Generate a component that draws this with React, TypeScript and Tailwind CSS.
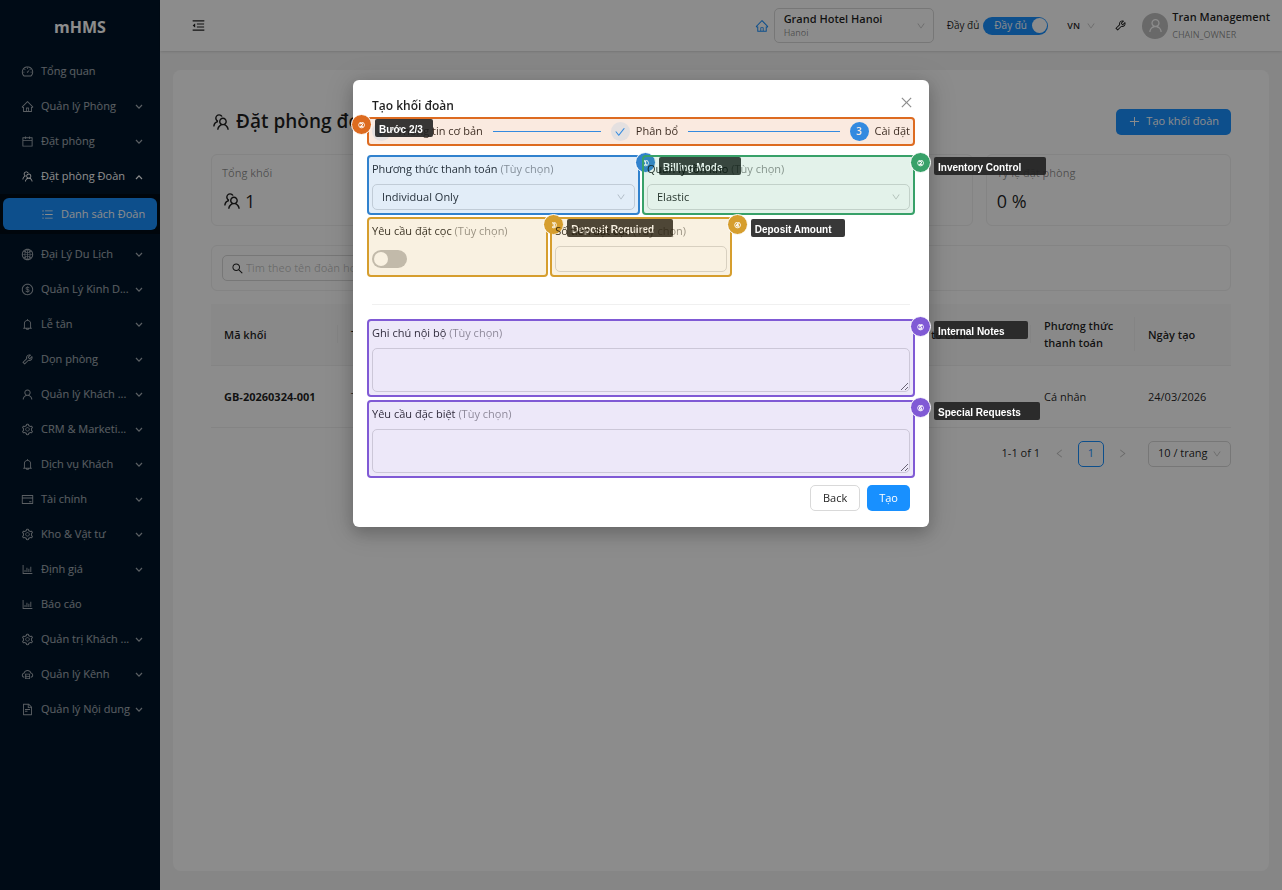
import { useState } from "react";
import type { ReactNode } from "react";
import type { IconType } from "react-icons";
import {
    AiOutlineBarChart,
    AiOutlineBell,
    AiOutlineCalendar,
    AiOutlineCheck,
    AiOutlineClose,
    AiOutlineCloudServer,
    AiOutlineCreditCard,
    AiOutlineDashboard,
    AiOutlineDollarCircle,
    AiOutlineDown,
    AiOutlineFileText,
    AiOutlineGlobal,
    AiOutlineHome,
    AiOutlineLeft,
    AiOutlineMenuFold,
    AiOutlinePlus,
    AiOutlineRight,
    AiOutlineSearch,
    AiOutlineSetting,
    AiOutlineTeam,
    AiOutlineTool,
    AiOutlineUnorderedList,
    AiOutlineUser,
} from "react-icons/ai";
import clsx from "clsx";

interface IMenuItem {
    label: string;
    icon: IconType;
    leaf?: boolean;
}

const topMenu: IMenuItem[] = [
    { label: "Tổng quan", icon: AiOutlineDashboard, leaf: true },
    { label: "Quản lý Phòng", icon: AiOutlineHome },
    { label: "Đặt phòng", icon: AiOutlineCalendar },
];

const bottomMenu: IMenuItem[] = [
    { label: "Đại Lý Du Lịch", icon: AiOutlineGlobal },
    { label: "Quản Lý Kinh D...", icon: AiOutlineDollarCircle },
    { label: "Lễ tân", icon: AiOutlineBell },
    { label: "Dọn phòng", icon: AiOutlineTool },
    { label: "Quản lý Khách ...", icon: AiOutlineUser },
    { label: "CRM & Marketi...", icon: AiOutlineSetting },
    { label: "Dịch vụ Khách", icon: AiOutlineBell },
    { label: "Tài chính", icon: AiOutlineCreditCard },
    { label: "Kho & Vật tư", icon: AiOutlineSetting },
    { label: "Định giá", icon: AiOutlineBarChart },
    { label: "Báo cáo", icon: AiOutlineBarChart, leaf: true },
    { label: "Quản trị Khách ...", icon: AiOutlineSetting },
    { label: "Quản lý Kênh", icon: AiOutlineCloudServer },
    { label: "Quản lý Nội dung", icon: AiOutlineFileText },
];

const MenuChevron = ({ open }: { open?: boolean }) => (
    <svg
        viewBox="0 0 8 6"
        className={clsx("ml-auto h-[6px] w-2 shrink-0", open && "rotate-180")}
        fill="none"
        stroke="currentColor"
        strokeWidth="1.2"
    >
        <path d="M1 1l3 3.2L7 1" />
    </svg>
);

const MenuRow = ({ item }: { item: IMenuItem }) => {
    const Icon = item.icon;
    return (
        <li>
            <a href="#" className="flex h-[35px] items-center pl-[21px] pr-[17px] whitespace-nowrap">
                <Icon className="size-[13px] shrink-0" />
                <span className="ml-[7px]">{item.label}</span>
                {!item.leaf && <MenuChevron />}
            </a>
        </li>
    );
};

const Sidebar = () => (
    <aside className="w-40 shrink-0 bg-[#001529] text-[11px] text-white/65">
        <div className="flex h-[53px] items-center justify-center text-base font-bold text-white">mHMS</div>
        <nav className="pt-px">
            <ul>
                {topMenu.map((item) => (
                    <MenuRow key={item.label} item={item} />
                ))}
                <li>
                    <a href="#" className="flex h-[35px] items-center pl-[21px] pr-[17px] whitespace-nowrap text-white">
                        <AiOutlineTeam className="size-[13px] shrink-0" />
                        <span className="ml-[7px]">Đặt phòng Đoàn</span>
                        <MenuChevron open />
                    </a>
                    <ul className="mb-[3px] bg-[#000c17] px-[3px] py-1">
                        <li>
                            <a
                                href="#"
                                className="flex h-8 items-center rounded-md bg-[#1890ff] pl-[38px] whitespace-nowrap text-white"
                            >
                                <AiOutlineUnorderedList className="size-[13px] shrink-0" />
                                <span className="ml-[7px]">Danh sách Đoàn</span>
                            </a>
                        </li>
                    </ul>
                </li>
                {bottomMenu.map((item) => (
                    <MenuRow key={item.label} item={item} />
                ))}
            </ul>
        </nav>
    </aside>
);

const Header = () => {
    const [full, setFull] = useState(true);
    return (
        <header className="relative flex h-[51px] items-center bg-white pr-3 pl-[31px] text-[11px] shadow-sm">
            <button type="button" aria-label="Menu">
                <AiOutlineMenuFold className="size-[15px]" />
            </button>
            <AiOutlineHome className="ml-auto size-[14px] text-[#1890ff]" />
            <div className="relative ml-[5px] flex h-[35px] w-40 flex-col justify-center rounded-[5px] border border-[#d9d9d9] px-[9px] pb-[3px]">
                <select
                    aria-label="Hotel"
                    className="h-4 w-full appearance-none bg-transparent text-[11px] leading-4 font-semibold outline-none"
                >
                    <option>Grand Hotel Hanoi</option>
                </select>
                <span className="text-[9px] leading-[11px] text-black/45">Hanoi</span>
                <AiOutlineDown className="pointer-events-none absolute top-3 right-[7px] size-[10px] text-black/25" />
            </div>
            <span className="ml-[13px] text-[10px]">Đầy đủ</span>
            <button
                type="button"
                role="switch"
                aria-checked={full}
                aria-label="Đầy đủ"
                onClick={() => setFull(!full)}
                className="ml-1 flex h-[18px] w-[65px] items-center justify-between rounded-full bg-[#1890ff] pr-px pl-[11px] text-[10px] text-white"
            >
                Đầy đủ
                <span className="size-[15px] rounded-full bg-white" />
            </button>
            <div className="relative ml-[19px] w-7">
                <select
                    aria-label="Language"
                    className="block w-full appearance-none bg-transparent text-[9px] font-semibold outline-none"
                >
                    <option>VN</option>
                </select>
                <AiOutlineDown className="pointer-events-none absolute top-0.5 -right-px size-[10px] text-black/25" />
            </div>
            <button type="button" aria-label="Tools" className="ml-[19px]">
                <AiOutlineTool className="size-[13px]" />
            </button>
            <span className="ml-[15px] flex size-[26px] items-center justify-center rounded-full bg-[#bfbfbf] text-white">
                <AiOutlineUser className="size-[17px]" />
            </span>
            <div className="ml-1">
                <p className="text-[11px] leading-[18px] font-semibold">Tran Management</p>
                <p className="text-[9px] leading-[18px] text-black/45">CHAIN_OWNER</p>
            </div>
        </header>
    );
};

const StatCard = ({ label, children }: { label?: string; children?: ReactNode }) => (
    <div className="h-[72px] rounded-md border border-[#f0f0f0] px-[10px] py-[9px]">
        {label && <p className="text-[11px] leading-[18px] text-black/45">{label}</p>}
        <div className="mt-1 flex items-center gap-[3px] text-lg leading-[30px]">{children}</div>
    </div>
);

const columns = ["Mã khối", "Tên đoàn", "Loại tổ chức", "Phương thức thanh toán", "Ngày tạo"];

const GroupBlocks = () => (
    <main className="mx-[13px] mt-[19px] mb-[19px] flex-1 rounded-lg bg-white px-[38px] pt-[38px]">
        <div className="flex h-[27px] items-center">
            <h1 className="flex items-center gap-[5px] text-[19px] font-semibold">
                <AiOutlineTeam className="size-5" />
                Đặt phòng đoàn
            </h1>
            <button
                type="button"
                className="ml-auto flex h-[26px] items-center gap-[5px] rounded-[5px] bg-[#1890ff] px-3 text-[11px] text-white"
            >
                <AiOutlinePlus className="size-[13px]" />
                Tạo khối đoàn
            </button>
        </div>

        <section className="mt-[19px] grid grid-cols-4 gap-[13px]">
            <StatCard label="Tổng khối">
                <AiOutlineTeam className="size-5" />1
            </StatCard>
            <StatCard />
            <StatCard />
            <StatCard label="Tỷ lệ đặt phòng">0 %</StatCard>
        </section>

        <div className="mt-[19px] rounded-md border border-[#f0f0f0] px-[10px] py-[9px]">
            <div className="flex h-[26px] w-64 items-center rounded-[5px] border border-[#d9d9d9] px-[8px]">
                <AiOutlineSearch className="size-[13px] shrink-0" />
                <input
                    type="text"
                    aria-label="Tìm kiếm"
                    placeholder="Tìm theo tên đoàn hoặc mã khối"
                    className="ml-0.5 w-full bg-transparent text-[11px] outline-none placeholder:text-black/25"
                />
            </div>
        </div>

        <table className="mt-[13px] w-full table-fixed text-left text-[11px] leading-[17px]">
            <colgroup>
                <col className="w-[127px]" />
                <col />
                <col className="w-[138px]" />
                <col className="w-[104px]" />
                <col className="w-[96px]" />
            </colgroup>
            <thead>
                <tr className="h-[61px] border-b border-[#f0f0f0] bg-[#fafafa]">
                    {columns.map((name, i) => (
                        <th key={name} className="p-0 font-semibold">
                            <div
                                className={clsx(
                                    "flex min-h-[18px] items-center px-[13px]",
                                    i < columns.length - 1 && "border-r border-[#f0f0f0]",
                                )}
                            >
                                {name}
                            </div>
                        </th>
                    ))}
                </tr>
            </thead>
            <tbody>
                <tr className="h-[62px] border-b border-[#f0f0f0]">
                    <td className="pl-[13px] font-bold">GB-20260324-001</td>
                    <td className="pl-[13px]">T</td>
                    <td />
                    <td className="pl-[13px]">Cá nhân</td>
                    <td className="pl-[13px]">24/03/2026</td>
                </tr>
            </tbody>
        </table>

        <div className="mt-[13px] flex items-center justify-end text-[11px]">
            <span>1-1 of 1</span>
            <button type="button" aria-label="Previous" className="ml-[14px] text-black/25">
                <AiOutlineLeft className="size-[11px]" />
            </button>
            <button
                type="button"
                className="ml-[13px] size-[26px] rounded-[5px] border border-[#1890ff] text-[#1890ff]"
            >
                1
            </button>
            <button type="button" aria-label="Next" className="ml-[13px] text-black/25">
                <AiOutlineRight className="size-[11px]" />
            </button>
            <div className="relative ml-5 h-[26px] w-[83px] rounded-[5px] border border-[#d9d9d9]">
                <select
                    aria-label="Page size"
                    className="h-full w-full appearance-none bg-transparent pl-[9px] text-[11px] outline-none"
                >
                    <option>10 / trang</option>
                </select>
                <AiOutlineDown className="pointer-events-none absolute top-[7px] right-2 size-[10px] text-black/25" />
            </div>
        </div>
    </main>
);

type Tone = "orange" | "blue" | "green" | "gold" | "purple";

const frameTone: Record<Tone, string> = {
    orange: "border-[#dd6b20] bg-[#dd6b20]/14",
    blue: "border-[#3182ce] bg-[#3182ce]/14",
    green: "border-[#38a169] bg-[#38a169]/14",
    gold: "border-[#d69e2e] bg-[#d69e2e]/14",
    purple: "border-[#805ad5] bg-[#805ad5]/14",
};

const badgeTone: Record<Tone, string> = {
    orange: "bg-[#dd6b20]",
    blue: "bg-[#3182ce]",
    green: "bg-[#38a169]",
    gold: "bg-[#d69e2e]",
    purple: "bg-[#805ad5]",
};

interface ICalloutProps {
    tone: Tone;
    mark: string;
    text: string;
    width: string;
    side?: "left" | "right";
}

// highlight frame with a numbered badge on one of its top corners
const Callout = ({ tone, mark, text, width, side = "right" }: ICalloutProps) => (
    <div
        className={clsx(
            "pointer-events-none absolute -inset-[5px] rounded-[4px] border-2",
            frameTone[tone],
        )}
    >
        <div className={clsx("absolute -top-1 flex", side === "left" ? "-left-[18px]" : "left-full -ml-[3px]")}>
            <span
                className={clsx(
                    "-mt-px flex size-[21px] shrink-0 items-center justify-center rounded-full border border-white text-[8px] font-bold text-white",
                    badgeTone[tone],
                )}
            >
                {mark}
            </span>
            <span
                className={clsx(
                    "mt-1 ml-[3px] h-[18px] shrink-0 rounded-[2px] bg-[#1f1f1f]/89 pl-1 font-['Liberation_Sans'] text-[10px] leading-[22px] font-bold whitespace-nowrap text-white",
                    width,
                )}
            >
                {text}
            </span>
        </div>
    </div>
);

interface IFieldProps {
    id: string;
    label: string;
    callout: ICalloutProps;
    children: ReactNode;
}

const Field = ({ id, label, callout, children }: IFieldProps) => (
    <div className="relative">
        <label htmlFor={id} className="mb-1.5 block h-[18px] text-[11px] leading-[18px] whitespace-nowrap">
            {label} <span className="text-black/45">(Tùy chọn)</span>
        </label>
        {children}
        <Callout {...callout} />
    </div>
);

const SelectBox = ({ id, value }: { id: string; value: string }) => (
    <div className="relative h-[26px] rounded-[5px] border border-[#d9d9d9]">
        <select id={id} className="h-full w-full appearance-none bg-transparent pl-[9px] text-[11px] outline-none">
            <option>{value}</option>
        </select>
        <AiOutlineDown className="pointer-events-none absolute top-[7px] right-2 size-[10px] text-black/25" />
    </div>
);

const Step = ({ title, done, last }: { title: string; done?: boolean; last?: boolean }) => (
    <li className={clsx("flex items-center", !last && "flex-1")}>
        <span
            className={clsx(
                "flex size-[19px] shrink-0 items-center justify-center rounded-full text-[10px] font-semibold",
                done ? "bg-[#e6f4ff] text-[#1890ff]" : "bg-[#1890ff] text-white",
            )}
        >
            {done ? <AiOutlineCheck className="size-3" /> : "3"}
        </span>
        <span className="ml-1.5 whitespace-nowrap">{title}</span>
        {!last && <span className="mx-[10px] h-px flex-1 bg-[#1890ff]" />}
    </li>
);

const CreateGroupModal = () => {
    const [deposit, setDeposit] = useState(false);
    return (
        <div className="fixed inset-0 overflow-hidden bg-black/45 px-4 pt-20">
            <div
                role="dialog"
                aria-label="Tạo khối đoàn"
                className="relative mx-auto w-full max-w-xl rounded-md bg-white px-[19px] pt-4 pb-4 text-[11px] shadow-[0_6px_16px_rgba(0,0,0,0.2),0_3px_28px_8px_rgba(0,0,0,0.1)]"
            >
                <button
                    type="button"
                    aria-label="Close"
                    className="absolute top-[15px] right-[15px] flex size-[15px] items-center justify-center text-black/45"
                >
                    <AiOutlineClose className="size-[15px]" />
                </button>
                <h2 className="text-xs leading-5 font-semibold">Tạo khối đoàn</h2>

                <div className="relative mt-1.5">
                    <ol className="flex">
                        <Step title="Thông tin cơ bản" done />
                        <Step title="Phân bổ" done />
                        <Step title="Cài đặt" last />
                    </ol>
                    <Callout tone="orange" mark="②" text="Bước 2/3" width="w-[58px]" side="left" />
                </div>

                <form>
                    <div className="mt-[19px] grid grid-cols-2 gap-3">
                        <Field
                            id="billing"
                            label="Phương thức thanh toán"
                            callout={{ tone: "blue", mark: "①", text: "Billing Mode", width: "w-[82px]" }}
                        >
                            <SelectBox id="billing" value="Individual Only" />
                        </Field>
                        <Field
                            id="inventory"
                            label="Quản lý tồn kho"
                            callout={{ tone: "green", mark: "②", text: "Inventory Control", width: "w-28" }}
                        >
                            <SelectBox id="inventory" value="Elastic" />
                        </Field>
                    </div>
                    <div className="mt-3 grid grid-cols-3 gap-3">
                        <Field
                            id="deposit"
                            label="Yêu cầu đặt cọc"
                            callout={{ tone: "gold", mark: "③", text: "Deposit Required", width: "w-[106px]" }}
                        >
                            <div className="flex h-[26px] items-center">
                                <button
                                    id="deposit"
                                    type="button"
                                    role="switch"
                                    aria-checked={deposit}
                                    onClick={() => setDeposit(!deposit)}
                                    className="flex h-[18px] w-[35px] items-center rounded-full bg-[#bfbfbf] px-0.5"
                                >
                                    <span className="size-[14px] rounded-full bg-white" />
                                </button>
                            </div>
                        </Field>
                        <Field
                            id="amount"
                            label="Số tiền đặt cọc"
                            callout={{ tone: "gold", mark: "④", text: "Deposit Amount", width: "w-[94px]" }}
                        >
                            <input
                                id="amount"
                                type="text"
                                className="block h-[26px] w-full rounded-[5px] border border-[#d9d9d9] px-[9px] outline-none"
                            />
                        </Field>
                    </div>
                    <hr className="mt-8 mb-[19px] border-[#f0f0f0]" />
                    <div className="flex flex-col gap-[13px]">
                        <Field
                            id="notes"
                            label="Ghi chú nội bộ"
                            callout={{ tone: "purple", mark: "⑤", text: "Internal Notes", width: "w-[94px]" }}
                        >
                            <textarea
                                id="notes"
                                className="block h-11 w-full rounded-[5px] border border-[#d9d9d9] px-[9px] outline-none"
                            />
                        </Field>
                        <Field
                            id="requests"
                            label="Yêu cầu đặc biệt"
                            callout={{ tone: "purple", mark: "⑥", text: "Special Requests", width: "w-[106px]" }}
                        >
                            <textarea
                                id="requests"
                                className="block h-11 w-full rounded-[5px] border border-[#d9d9d9] px-[9px] outline-none"
                            />
                        </Field>
                    </div>
                    <div className="mt-3 flex justify-end gap-[7px]">
                        <button type="button" className="h-[26px] rounded-[5px] border border-[#d9d9d9] px-3">
                            Back
                        </button>
                        <button type="button" className="h-[26px] rounded-[5px] bg-[#1890ff] px-3 text-white">
                            Tạo
                        </button>
                    </div>
                </form>
            </div>
        </div>
    );
};

const App = () => (
    <div className="flex min-h-screen bg-[#f5f5f5] font-['Open_Sans','Noto_Sans',sans-serif] text-black/88">
        <Sidebar />
        <div className="flex min-w-0 flex-1 flex-col">
            <Header />
            <GroupBlocks />
        </div>
        <CreateGroupModal />
    </div>
);

export default App;
